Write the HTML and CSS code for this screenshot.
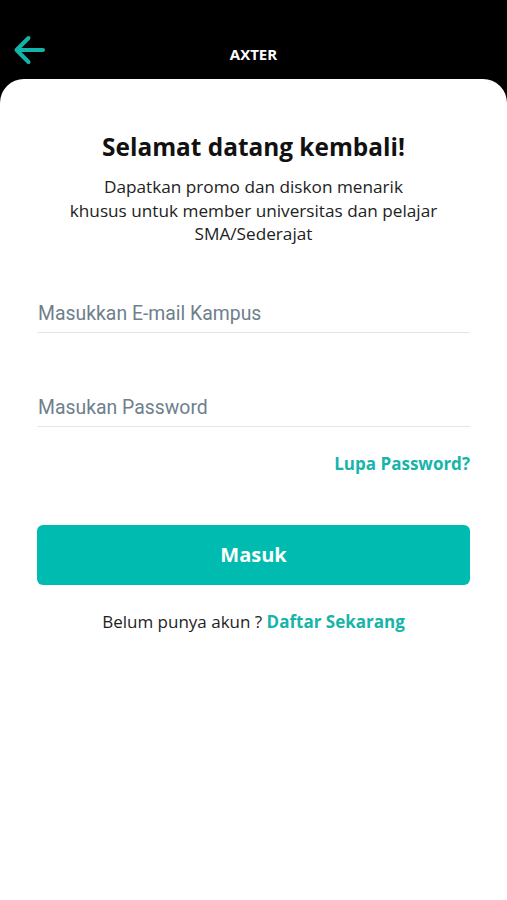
FILE: index.html
```html
<!doctype html>
<html lang="id">
<head>
  <meta charset="UTF-8">
  <title>AXTER - Masuk</title>
  <link rel="stylesheet" href="styles.css">
</head>
<body>
  <div class="topbar">
    <a class="back" href="#">
      <svg width="32" height="32" viewBox="0 0 32 32">
        <path d="M30 16H4M15.5 4L3.5 16L15.5 28" fill="none" stroke="#14b3a8" stroke-width="4" stroke-linecap="round" stroke-linejoin="round"/>
      </svg>
    </a>
    <div class="title">AXTER</div>
    <div class="spacer"></div>
  </div>

  <div class="card">
    <h1>Selamat datang kembali!</h1>
    <p class="sub">Dapatkan promo dan diskon menarik<br>khusus untuk member universitas dan pelajar<br>SMA/Sederajat</p>

    <form class="form">
      <input class="field" type="email" placeholder="Masukkan E-mail Kampus">
      <input class="field pass" type="password" placeholder="Masukan Password">
      <a class="forgot" href="#">Lupa Password?</a>
      <button class="btn" type="button">Masuk</button>
    </form>

    <p class="register">Belum punya akun ? <a href="#">Daftar Sekarang</a></p>
  </div>
</body>
</html>
```

FILE: styles.css
```css
*{margin:0;
  padding:0;
  box-sizing:border-box;}
body{background:#000;
     font-family:"Open Sans", "Noto Sans", sans-serif;
     color:#1e1e1e;}
a{text-decoration:none;}

/* header */
.topbar{height:79px;
        padding:34px 13px 0;
        display:grid;
        grid-template-columns:32px 1fr 32px;
        align-items:start;}
.back{display:block;height:32px;}
.back svg{display:block;}
.title{color:#fff;
       font-weight:700;
       font-size:15px;
       line-height:20px;
       margin-top:10px;
       text-align:center;}

/* card */
.card{background:#fff;
      border-radius:24px 24px 0 0;
      min-height:821px;
      padding:52px 37px 0;
      text-align:center;}
.card h1{font-size:24.4px;
         line-height:32px;
         font-weight:700;
         color:#111;}
.sub{margin-top:12px;
     font-size:17.2px;
     line-height:23.5px;
     color:#222;}

.form{display:flex;
      flex-direction:column;
      margin-top:50px;}
.field{height:37px;
       border:none;
       border-bottom:1px solid #e3e6e8;
       font-family:Roboto, sans-serif;
       font-size:19.4px;
       color:#333;
       padding:0 1px;
       outline:none;
       background:transparent;}
.field::placeholder{color:#6e808b;}
.pass{margin-top:57px;}
.forgot{align-self:flex-end;
        margin-top:26px;
        font-size:17px;
        line-height:22px;
        font-weight:700;
        color:#17b4a9;}
.btn{margin-top:50px;
     height:60px;
     border:none;
     border-radius:6px;
     background:#00bbb0;
     color:#fff;
     font-family:"Open Sans", sans-serif;
     font-size:20px;
     font-weight:700;
     cursor:pointer;}
.register{margin-top:26px;
          font-size:17px;
          line-height:22px;
          color:#1e1e1e;}
.register a{font-weight:700;color:#17b4a9;}
```
